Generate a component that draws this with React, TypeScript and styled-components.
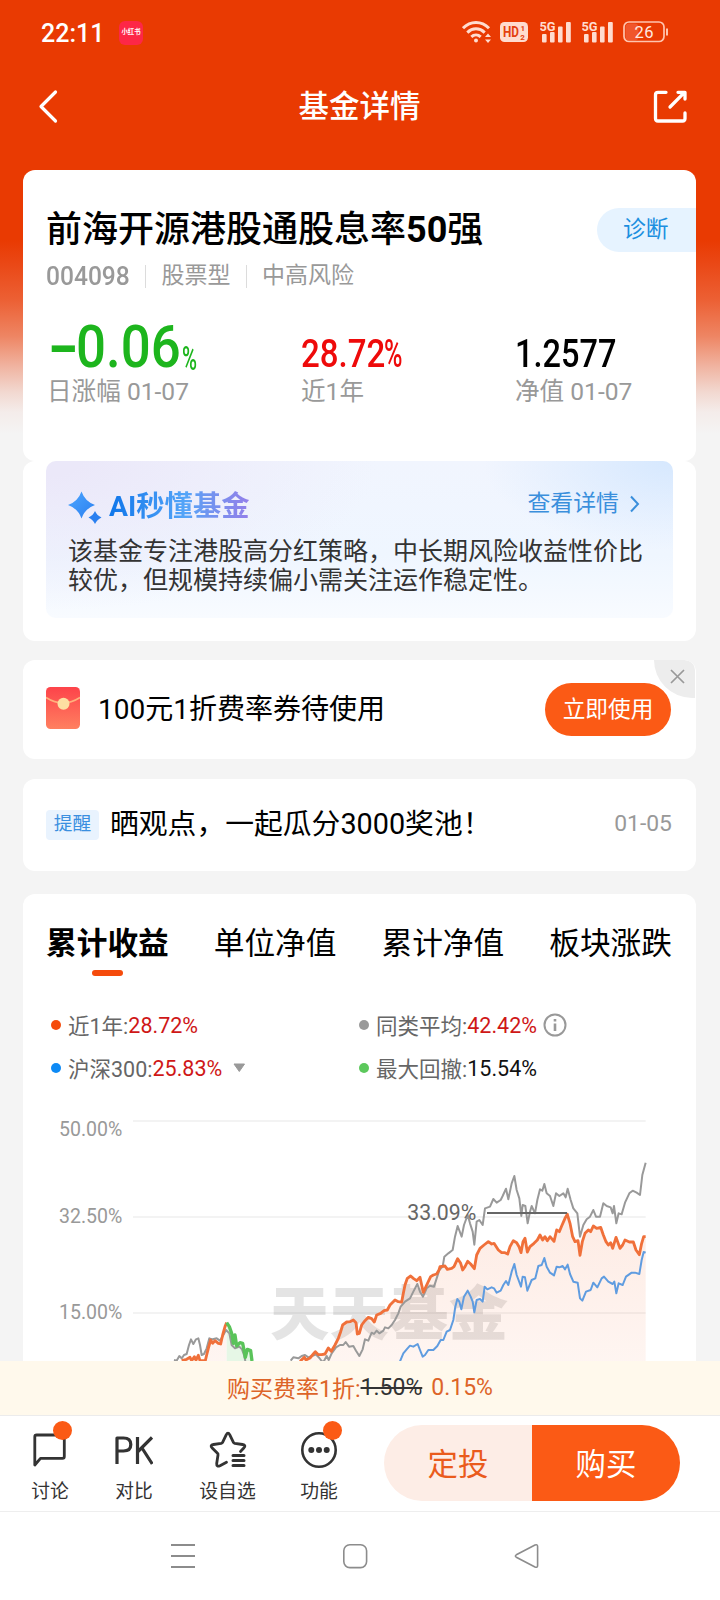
import React from "react";
import styled, { createGlobalStyle } from "styled-components";

const Global = createGlobalStyle`
  * { box-sizing: border-box; }
  body { margin: 0; background: #f4f4f4; }
  svg { display: block; flex: none; }
`;

const FONT = `Roboto, "Noto Sans CJK SC", sans-serif`;

const Page = styled.div`
  width: 720px;
  height: 1600px;
  overflow: hidden;
  display: flex;
  flex-direction: column;
  font-family: ${FONT};
  color: #000;
  white-space: nowrap;
`;

const Scroll = styled.main`
  height: 1361px;
  flex: none;
  overflow: hidden;
  padding: 0 24px 0 23px;
  background: linear-gradient(
    #e93a02 0px, #e93a02 240px, #ea4816 264px, #ec6034 300px, #ee8563 336px,
    #f0b3a0 366px, #f2d8d0 392px, #f4ecea 412px, #f4f4f4 434px
  );
`;

const StatusBar = styled.header`
  height: 65px;
  margin: 0 5px 0 18px;
  display: flex;
  align-items: center;
  color: #fff;
`;

const Clock = styled.span`
  width: 61px;
  padding-top: 2px;
  font-size: 25px;
  font-weight: 500;
  line-height: 30px;
`;

const AppBadge = styled.span`
  width: 24px;
  height: 24px;
  margin-left: 17px;
  border-radius: 6px;
  background: #fd2747;
  font-size: 6.4px;
  font-weight: 700;
  line-height: 23px;
  display: flex;
  justify-content: center;
`;

const StatusIcons = styled.div`
  margin: -1px 22px 0 auto;
  display: flex;
  align-items: center;
`;

const NavBar = styled.div`
  height: 105px;
  padding-bottom: 22px;
  margin: 0 -14px 0 -13px;
  display: grid;
  grid-template-columns: 80px 1fr 80px;
  align-items: center;
  color: #fff;
`;

const NavTitle = styled.h1`
  margin: 1px 0 0 -1px;
  text-align: center;
  font-size: 30.5px;
  font-weight: 500;
  line-height: 40px;
`;

const Card = styled.section<{ $h?: number; $gap?: number; $row?: boolean }>`
  height: ${(p) => (p.$h ? `${p.$h}px` : "auto")};
  margin-top: ${(p) => p.$gap ?? 0}px;
  border-radius: 12px;
  background: #fff;
  overflow: hidden;
  position: relative;
  ${(p) => p.$row && "display: flex; align-items: center; padding: 0 25px 0 23px;"}
`;

const TitleRow = styled.div`
  margin-top: 38px;
  padding-left: 23px;
  height: 44px;
  display: flex;
  align-items: center;
  justify-content: space-between;
`;

const FundName = styled.h2`
  margin: 0;
  font-size: 36px;
  font-weight: 500;
  line-height: 44px;
  b { font-weight: 700; }
`;

const Diagnose = styled.span`
  width: 99px;
  height: 44px;
  padding-left: 26px;
  border-radius: 22px 0 0 22px;
  background: #e6f3ff;
  color: #1c8fe0;
  font-size: 22.8px;
  line-height: 44px;
`;

const MetaRow = styled.div`
  height: 30px;
  margin-top: 9px;
  padding-left: 23px;
  display: flex;
  align-items: center;
  color: #999;
  font-size: 23px;
  line-height: 30px;
`;

const Divider = styled.i`
  width: 1px;
  height: 23px;
  margin: 0 15.5px 0 15px;
  background: #dcdcdc;
`;

const Squeeze = styled.span<{ $w: number; $scale: number; $size: number; $weight?: number }>`
  width: ${(p) => p.$w}px;
  display: inline-block;
  font-size: ${(p) => p.$size}px;
  font-weight: ${(p) => p.$weight ?? 500};
  transform: scaleX(${(p) => p.$scale});
  transform-origin: left center;
`;

const Metrics = styled.div`
  margin-top: 20px;
  padding-left: 24px;
  display: grid;
  grid-template-columns: 254px 214px 1fr;
`;

const Value = styled.div<{ $color: string }>`
  height: 66px;
  color: ${(p) => p.$color};
  display: flex;
  align-items: baseline;
  line-height: 60px;
  &::before { content: ""; height: 56px; }
`;

const Unit = styled.span`
  padding-top: 17px;
  margin-left: 2px;
  align-self: flex-start;
  height: 60px;
`;

const MetricLabel = styled.div`
  height: 30px;
  color: #999;
  font-size: 24.6px;
  line-height: 30px;
`;

const AiPanel = styled.div`
  height: 157px;
  margin: 0 23px 0 23px;
  padding: 28px 24px 0 22px;
  border-radius: 10px;
  background:
    radial-gradient(ellipse 190px 90px at 100% 0%, #d6e8fe 0%, rgba(214, 232, 254, 0) 100%),
    radial-gradient(ellipse 330px 150px at 0% 0%, #ebe8f9 10%, rgba(235, 232, 249, 0) 100%),
    linear-gradient(#f1f5fe, #eff6ff 60%, #f8fbff);
`;

const AiHead = styled.div`
  height: 34px;
  display: flex;
  align-items: center;
`;

const AiTitle = styled.b`
  margin-left: 7px;
  padding-top: 2px;
  font-size: 28.3px;
  line-height: 34px;
  font-weight: 700;
  color: transparent;
  background: linear-gradient(90deg, #0f76ea, #55a5f8 55%, #6f95f0 70%, #9380ea);
  background-clip: text;
  -webkit-background-clip: text;
`;

const AiMore = styled.span`
  margin-left: auto;
  display: flex;
  align-items: center;
  gap: 11px;
  padding-right: 9px;
  color: #3a8fdc;
  font-size: 22.9px;
  line-height: 30px;
  margin-top: -5px;
`;

const AiText = styled.p`
  margin: 14px 0 0;
  color: #333;
  font-size: 25px;
  line-height: 29.4px;
`;

const CouponText = styled.span`
  margin: -5px 0 0 18px;
  font-size: 28px;
`;

const UseButton = styled.button`
  width: 126px;
  height: 53px;
  margin-left: auto;
  padding: 0 0 4px;
  border: 0;
  border-radius: 27px;
  background: #fb5a15;
  color: #fff;
  font: 22.7px ${FONT};
`;

const CloseCorner = styled.span`
  position: absolute;
  right: 1px;
  top: 0;
  width: 41px;
  height: 38px;
  border-radius: 0 10px 0 38px;
  background: #ededed;
  display: flex;
  padding: 9px 0 0 16px;
`;

const NoticeTag = styled.span`
  width: 53px;
  height: 30px;
  border-radius: 4px;
  background: #e9f3fe;
  color: #3a8fe0;
  font-size: 18.7px;
  line-height: 29px;
  text-align: center;
`;

const NoticeText = styled.span`
  margin: -7px 0 0 11px;
  font-size: 28.8px;
`;

const NoticeDate = styled.span`
  margin: -3px -1px 0 auto;
  color: #999;
  font-size: 22.9px;
`;

const Tabs = styled.div`
  padding: 30px 24px 0 23px;
  display: flex;
  justify-content: space-between;
`;

const Tab = styled.div<{ $on?: boolean }>`
  height: 53px;
  font-size: 30.7px;
  line-height: 40px;
  font-weight: ${(p) => (p.$on ? 700 : 400)};
  display: flex;
  flex-direction: column;
  align-items: center;
  &::after {
    content: "";
    width: 31px;
    height: 6px;
    margin-top: 6px;
    border-radius: 3px;
    background: ${(p) => (p.$on ? "#f54b0c" : "transparent")};
  }
`;

const Legend = styled.div`
  height: 123px;
  padding: 26px 0 0 28px;
  display: grid;
  grid-template-columns: 308px 1fr;
  grid-auto-rows: 43px;
  align-items: center;
  align-content: start;
`;

const LegendItem = styled.div<{ $dot: string }>`
  display: flex;
  align-items: center;
  color: #666;
  font-size: 21.5px;
  &::before {
    content: "";
    width: 10px;
    height: 10px;
    margin-right: 7px;
    border-radius: 50%;
    background: ${(p) => p.$dot};
  }
  svg { margin-left: 6px; }
`;

const Num = styled.span<{ $up?: boolean }>`
  padding-top: 1px;
  color: ${(p) => (p.$up ? "#cf1717" : "#111")};
`;

const FeeBar = styled.div`
  height: 55px;
  padding-bottom: 2px;
  flex: none;
  background: #fff9ec;
  border-bottom: 1px solid #ececec;
  color: #dd6428;
  font-size: 23px;
  display: flex;
  justify-content: center;
  align-items: center;
  s { color: #333; margin-right: 9px; text-decoration-thickness: 1.5px; }
`;

const ActionBar = styled.div`
  height: 96px;
  flex: none;
  background: #fff;
  border-bottom: 1px solid #eee;
  display: flex;
`;

const Tool = styled.div<{ $w: number }>`
  width: ${(p) => p.$w}px;
  height: 95px;
  padding-top: 14px;
  color: #333;
  font-size: 18.8px;
  line-height: 26px;
  display: flex;
  flex-direction: column;
  align-items: center;
  gap: 9px;
`;

const ToolIcon = styled.span<{ $badge?: boolean }>`
  height: 40px;
  position: relative;
  display: flex;
  align-items: center;
  &::after {
    content: "";
    display: ${(p) => (p.$badge ? "block" : "none")};
    position: absolute;
    right: -5px;
    top: -9px;
    width: 19px;
    height: 19px;
    border-radius: 50%;
    background: #fb5a15;
  }
`;

const OrderButtons = styled.div`
  width: 296px;
  height: 76px;
  margin: 9px 40px 0 auto;
  border-radius: 38px;
  overflow: hidden;
  display: flex;
`;

const OrderButton = styled.button<{ $primary?: boolean }>`
  flex: 1;
  padding: 0 0 3px;
  border: 0;
  background: ${(p) => (p.$primary ? "#fb5a15" : "#fdede6")};
  color: ${(p) => (p.$primary ? "#fff" : "#ea5b1c")};
  font: 30.4px ${FONT};
`;

const SystemNav = styled.nav`
  height: 88px;
  flex: none;
  padding: 31px 180px 0 170px;
  background: #fff;
  display: flex;
  justify-content: space-between;
`;

const LIGHT = "#ffdccf";

const Signal = () => (
  <svg width="32" height="24" viewBox="0 0 32 24" fill={LIGHT}>
    <text x="-0.5" y="11" fontFamily="Roboto" fontWeight="700" fontSize="12.8" textLength="16">5G</text>
    <rect x="2" y="14" width="4.6" height="8.5" rx="1" />
    <rect x="10" y="12" width="4.6" height="10.5" rx="1" />
    <rect x="18" y="6.5" width="4.6" height="16" rx="1" />
    <rect x="26" y="2" width="4.8" height="20.5" rx="1" />
  </svg>
);

type Segment = { x: number; y: number; p: string };

/* Turns segments, each relative to its own origin, into one path. */
const trace = (segs: Segment[]) =>
  "M" +
  segs
    .flatMap((s) =>
      s.p.split(" ").map((c) => {
        const [x, y] = c.split(",").map(Number);
        return `${x + s.x},${y + s.y}`;
      })
    )
    .join("L");

const fundEarly = trace([{ x: 0, y: 0, p: "425,782 440,778 450,772 455,782 463,770 468,780 475,766 480,782 496,782 500,765 505,745 512,720 518,730 525,722 535,730 542,732 548,705 555,680 560,668" }]);
const drawdown = trace([{ x: 0, y: 0, p: "560,668 568,680 575,700 580,730 585,705 590,738 600,728 608,730 612,750 616,772 622,748 632,752 636,783" }]);
const fundMain = trace([
  { x: 630, y: 510, p: "150,274 163,262 168,270 180,264 190,252 196,245 205,254 215,254 225,252 235,234 244,244 255,225 265,205 272,185 278,165 290,156 300,155 310,150 318,158 322,192 328,190 335,165 345,152 355,142 365,146 373,156 380,135 392,130 402,122 412,120 420,105 435,90 445,95 455,96 460,70 465,45 472,25 482,18 490,25 500,32 510,22 515,45 520,67 530,45 542,20 550,15 560,12 567,0" },
  { x: 930, y: 60, p: "270,440 285,438 292,448 305,445 312,440 323,416 332,430 338,450 345,440 353,424 362,432 373,446 380,405 390,385 402,375 415,365 425,372 432,370 445,390 455,398 465,398 473,402 480,380 490,362 500,368 507,380 513,398 519,365 525,355 532,396 540,380 552,370 562,360 570,345 578,360 585,350 592,362 600,350 612,364 620,330 628,335 635,318 645,295 652,283 660,310 668,350 675,365 684,362 690,406 697,365 705,340 715,330 722,335 730,318 740,325 752,322 760,345 768,365 775,375 782,368 788,385 798,352 810,385 818,375 825,360 838,366 850,366 858,390 868,404 875,370 881,350 887,350" },
]);
const peersEarly = trace([{ x: 0, y: 0, p: "402,780 410,782 418,768 425,775 432,765 440,762 447,735 453,718 460,732 468,718 475,715 480,735 485,765 492,762 500,745 508,715 518,718 530,715 540,722 550,705 558,690 568,700 575,735 585,745 598,740 606,748 612,765 616,783" }]);
const peersMid = trace([{ x: 0, y: 0, p: "752,782 760,772 775,775 785,768 795,765 805,772 815,768 828,764 838,774 845,783" }]);
const peersMain = trace([
  { x: 630, y: 510, p: "215,275 222,273 230,258 236,270 245,250 258,232 270,225 280,225 287,216 297,230" },
  { x: 930, y: 60, p: "10,678 18,692 28,708 38,688 45,658 55,662 65,638 72,642 80,632 88,640 100,632 105,622 115,625 125,615 135,600 145,580 152,560 165,545 180,535 190,515 202,492 210,515 219,530 230,505 240,497 252,500 260,475 268,450 278,440 283,410 295,400 308,390 315,350 323,318 335,350 342,315 353,285 360,310 368,335 373,374 380,305 388,300 398,315 405,265 420,260 430,237 440,248 452,240 458,228 468,206 475,238 485,190 493,168 500,210 508,235 514,288 518,255 526,258 533,310 540,275 545,258 555,280 562,240 570,208 577,212 583,192 590,220 600,228 610,258 618,220 628,228 640,220 647,232 653,206 662,240 670,265 682,280 690,350 700,315 710,298 720,290 730,270 738,290 750,290 760,250 770,258 782,262 788,280 792,258 799,310 806,280 815,283 825,248 838,220 848,212 860,218 870,225 877,165 887,128" },
]);
const csi300 = trace([{ x: 930, y: 60, p: "150,724 160,700 170,688 180,677 190,680 203,672 210,690 218,710 225,705 235,690 250,690 262,678 272,660 280,660 290,635 300,630 310,600 316,560 322,537 328,545 334,568 342,530 353,512 362,530 368,545 373,577 380,540 390,537 398,545 404,500 412,508 425,502 432,505 440,518 452,512 460,495 468,483 475,495 485,455 493,432 500,465 513,500 518,470 525,472 532,512 545,480 556,475 565,438 575,435 583,414 590,440 600,458 612,466 620,440 628,442 638,438 645,448 653,434 660,462 670,485 683,488 690,535 697,542 708,515 722,510 730,488 742,502 755,475 762,470 775,485 788,492 793,485 799,520 806,490 818,495 828,470 845,458 855,458 868,462 875,420 881,396 887,398" }]);

const Chart = () => (
  <svg width="673" height="261" viewBox="-51 0 2019 783" fontFamily="Roboto" fill="none" strokeLinejoin="round">
    <defs>
      <linearGradient id="area" x1="0" y1="340" x2="0" y2="783" gradientUnits="userSpaceOnUse">
        <stop offset="0" stopColor="#f4713c" stopOpacity="0.14" />
        <stop offset="1" stopColor="#f4713c" stopOpacity="0.07" />
      </linearGradient>
    </defs>
    <g stroke="#f3f3f3" strokeWidth="6">
      <path d="M279 63H1817M279 351H1817M279 639H1817" />
    </g>
    <g fill="#999" fontSize="60">
      <text x="57" y="108" textLength="190" lengthAdjust="spacingAndGlyphs">50.00%</text>
      <text x="57" y="369" textLength="190" lengthAdjust="spacingAndGlyphs">32.50%</text>
      <text x="57" y="657" textLength="190" lengthAdjust="spacingAndGlyphs">15.00%</text>
    </g>
    <text x="690" y="705" fill="#000" fillOpacity="0.105" fontFamily="Noto Sans CJK SC" fontWeight="900" fontSize="178" textLength="714">天天基金</text>
    <path d={`${fundEarly}V783H425Z`} fill="url(#area)" />
    <path d={`${fundMain}V783H780Z`} fill="url(#area)" />
    <path d={`${drawdown}H560Z`} fill="#e6f7e6" />
    <g stroke="#999" strokeWidth="6">
      <path d={peersEarly} />
      <path d={peersMid} />
      <path d={peersMain} />
    </g>
    <path d={csi300} stroke="#5f9ce0" strokeWidth="6" />
    <g stroke="#f0703a" strokeWidth="8.5">
      <path d={fundEarly} />
      <path d={fundMain} />
    </g>
    <path d={drawdown} stroke="#5ac35a" strokeWidth="10" />
    <path d="M1341 339H1581" stroke="#666" strokeWidth="6" />
    <text x="1102" y="359" fill="#666" fontSize="66" textLength="207" lengthAdjust="spacingAndGlyphs">33.09%</text>
  </svg>
);

export default function App() {
  return (
    <Page>
      <Global />
      <Scroll>
        <StatusBar>
          <Clock>22:11</Clock>
          <AppBadge>小红书</AppBadge>
          <StatusIcons>
            <svg width="30" height="24" viewBox="0 0 30 24" fill="none" stroke={LIGHT} strokeWidth="3">
              <path d="M1 8.2C8.5 0.6 19.5 0.6 27 8.2M5.3 12.6C10.5 7.6 17.5 7.6 22.7 12.6M9.3 16.8C12 14.3 16 14.3 18.7 16.8" />
              <circle cx="14" cy="20.5" r="2" fill={LIGHT} stroke="none" />
              <path d="M23 17L26 13.5L29 17ZM23 19.5L26 23L29 19.5Z" fill={LIGHT} stroke="none" />
            </svg>
            <svg width="28" height="20" viewBox="0 0 28 20" style={{ marginLeft: 8 }}>
              <rect width="28" height="20" rx="4.5" fill={LIGHT} />
              <g fill="#e4410e" fontFamily="Roboto" fontWeight="700">
                <text x="3" y="15.3" fontSize="15" textLength="16" lengthAdjust="spacingAndGlyphs">HD</text>
                <text x="20.5" y="9" fontSize="8">1</text>
                <text x="20.2" y="17.8" fontSize="8">2</text>
              </g>
            </svg>
            <span style={{ marginLeft: 12 }}><Signal /></span>
            <span style={{ marginLeft: 10 }}><Signal /></span>
            <svg width="46" height="22" viewBox="0 0 46 22" style={{ marginLeft: 9 }}>
              <rect x="2.5" y="2.5" width="13" height="17" rx="4" fill="#f0562c" />
              <rect x="1" y="1" width="40" height="19.5" rx="5" fill="none" stroke="#ffc4ae" strokeWidth="1.7" />
              <path d="M44 7.5V14.5" stroke="#ffc4ae" strokeWidth="2" />
              <text x="11.5" y="16.7" fill="#ffe9e0" fontFamily="Roboto" fontSize="16.5" textLength="19">26</text>
            </svg>
          </StatusIcons>
        </StatusBar>

        <NavBar>
          <svg width="80" height="44" viewBox="0 0 80 44" fill="none" stroke="#fff" strokeWidth="3.2" strokeLinecap="round" strokeLinejoin="round">
            <path d="M45.5 7L31 21.5L45.5 36" />
          </svg>
          <NavTitle>基金详情</NavTitle>
          <svg width="80" height="44" viewBox="0 0 80 44" fill="none" stroke="#fff" strokeWidth="3.3" strokeLinecap="round" strokeLinejoin="round">
            <path d="M36 7.3H28Q25.5 7.3 25.5 9.8V33.5Q25.5 36 28 36H52.5Q55 36 55 33.5V28M40 22L54 7.8M48 7.3H55V14" />
          </svg>
        </NavBar>

        <Card $h={291}>
          <TitleRow>
            <FundName>前海开源港股通股息率<b>50</b>强</FundName>
            <Diagnose>诊断</Diagnose>
          </TitleRow>
          <MetaRow>
            <Squeeze $w={84} $scale={0.945} $size={26}>004098</Squeeze>
            <Divider />
            股票型
            <Divider />
            中高风险
          </MetaRow>
          <Metrics>
            <div>
              <Value $color="#1db51d">
                <Squeeze $w={29} $scale={1.4} $size={60} $weight={700}>-</Squeeze>
                <Squeeze $w={104} $scale={0.88} $size={60}>0.06</Squeeze>
                <Unit><Squeeze $w={15} $scale={0.6} $size={34}>%</Squeeze></Unit>
              </Value>
              <MetricLabel>日涨幅 01-07</MetricLabel>
            </div>
            <div>
              <Value $color="#ee0a0a">
                <Squeeze $w={83} $scale={0.87} $size={38}>28.72</Squeeze>
                <Squeeze $w={20} $scale={0.66} $size={38}>%</Squeeze>
              </Value>
              <MetricLabel>近1年</MetricLabel>
            </div>
            <div>
              <Value $color="#000">
                <Squeeze $w={100} $scale={0.855} $size={38}>1.2577</Squeeze>
              </Value>
              <MetricLabel>净值 01-07</MetricLabel>
            </div>
          </Metrics>
        </Card>

        <Card $h={180}>
          <AiPanel>
            <AiHead>
              <svg width="34" height="34" viewBox="0 0 34 34" style={{ marginTop: 4 }}>
                <defs>
                  <linearGradient id="star" x1="0" y1="0" x2="1" y2="1">
                    <stop offset="0" stopColor="#4da6ff" />
                    <stop offset="1" stopColor="#2a7ff0" />
                  </linearGradient>
                </defs>
                <path d="M13.5 0.5Q17 10.5 27 14Q17 17.5 13.5 27.5Q10 17.5 0 14Q10 10.5 13.5 0.5Z" fill="url(#star)" />
                <path d="M27 20Q29 24.5 33.5 26.5Q29 28.5 27 33Q25 28.5 20.5 26.5Q25 24.5 27 20Z" fill="#2a80f0" />
              </svg>
              <AiTitle>AI秒懂基金</AiTitle>
              <AiMore>
                查看详情
                <svg width="10" height="18" viewBox="0 0 10 18" fill="none" stroke="#3a8fdc" strokeWidth="2">
                  <path d="M1 1.5L8 9L1 16.5" />
                </svg>
              </AiMore>
            </AiHead>
            <AiText>
              该基金专注港股高分红策略，中长期风险收益性价比
              <br />
              较优，但规模持续偏小需关注运作稳定性。
            </AiText>
          </AiPanel>
        </Card>

        <Card $h={99} $gap={19} $row>
          <svg width="34" height="42" viewBox="0 0 34 42" style={{ marginTop: -3 }}>
            <defs>
              <linearGradient id="packet" x1="0" y1="0" x2="0" y2="1">
                <stop offset="0" stopColor="#fd434a" />
                <stop offset="1" stopColor="#ff8060" />
              </linearGradient>
            </defs>
            <rect width="34" height="42" rx="4.5" fill="url(#packet)" />
            <path d="M0 10.5Q17 21.5 34 10.5" fill="none" stroke="#ffb07c" strokeWidth="1.5" />
            <circle cx="17.5" cy="16.8" r="6" fill="#fddfa2" />
          </svg>
          <CouponText>100元1折费率券待使用</CouponText>
          <UseButton>立即使用</UseButton>
          <CloseCorner>
            <svg width="15" height="15" viewBox="0 0 15 15" stroke="#999" strokeWidth="1.7">
              <path d="M1 1L14 14M14 1L1 14" />
            </svg>
          </CloseCorner>
        </Card>

        <Card $h={92} $gap={20} $row>
          <NoticeTag>提醒</NoticeTag>
          <NoticeText>晒观点，一起瓜分3000奖池！</NoticeText>
          <NoticeDate>01-05</NoticeDate>
        </Card>

        <Card $h={480} $gap={23}>
          <Tabs>
            <Tab $on>累计收益</Tab>
            <Tab>单位净值</Tab>
            <Tab>累计净值</Tab>
            <Tab>板块涨跌</Tab>
          </Tabs>
          <Legend>
            <LegendItem $dot="#f54b0c">近1年:<Num $up>28.72%</Num></LegendItem>
            <LegendItem $dot="#999">
              同类平均:<Num $up>42.42%</Num>
              <svg width="24" height="24" viewBox="0 0 24 24" fill="none" stroke="#999" strokeWidth="2">
                <circle cx="12" cy="12" r="10.5" />
                <path d="M12 10.5V18M12 6V8.6" strokeWidth="2.6" />
              </svg>
            </LegendItem>
            <LegendItem $dot="#0d8af5">
              沪深300:<Num $up>25.83%</Num>
              <svg width="24" height="10" viewBox="0 0 24 10">
                <path d="M6 1H16.5L11.3 8.5Z" fill="#999" stroke="#999" strokeLinejoin="round" />
              </svg>
            </LegendItem>
            <LegendItem $dot="#5cc85c">最大回撤:<Num>15.54%</Num></LegendItem>
          </Legend>
          <Chart />
        </Card>
      </Scroll>

      <FeeBar>
        购买费率1折:<s>1.50%</s>0.15%
      </FeeBar>

      <ActionBar>
        <Tool $w={100}>
          <ToolIcon $badge>
            <svg width="34" height="34" viewBox="0 0 34 34" fill="none" stroke="#333" strokeWidth="2.8" strokeLinejoin="round">
              <path d="M1.8 32V3.8Q1.8 2 3.6 2H29.5Q31.3 2 31.3 3.8V23.5Q31.3 25.3 29.5 25.3H7.5L1.8 32Z" />
            </svg>
          </ToolIcon>
          讨论
        </Tool>
        <Tool $w={68}>
          <ToolIcon>
            <svg width="38" height="30" viewBox="0 0 38 30" fill="none" stroke="#333" strokeWidth="3.2" strokeLinejoin="round">
              <path d="M2 29V3H8.5Q15.8 3 15.8 9.5T8.5 16H2M22.5 2V29M37 2.5L23 16.5M27 13L37.3 29" />
            </svg>
          </ToolIcon>
          对比
        </Tool>
        <Tool $w={119}>
          <ToolIcon>
            <svg width="38" height="38" viewBox="0 0 38 38" fill="none" stroke="#333" strokeWidth="2.8" strokeLinecap="round" strokeLinejoin="round">
              <path d="M31.5 20.5L34.8 17Q37.5 14.2 33.5 13.5L25.8 12.3Q24.8 12 24.3 11.2L20.8 3.8Q19 0.5 17.2 3.8L13.7 11.2Q13.2 12 12.2 12.3L4.5 13.5Q0.5 14.2 3.2 17L8.5 22.3Q9.2 23 9 24L7.7 32.5Q7.5 36.3 11 34.8L17.5 31.3" />
              <path d="M24 24.5H35M24 29.5H35M24 34.5H35" strokeWidth="3" />
            </svg>
          </ToolIcon>
          设自选
        </Tool>
        <Tool $w={64}>
          <ToolIcon $badge>
            <svg width="36" height="36" viewBox="0 0 36 36">
              <circle cx="18" cy="18" r="16.7" fill="none" stroke="#333" strokeWidth="2.6" />
              <circle cx="10.3" cy="18" r="3" fill="#333" />
              <circle cx="18" cy="18" r="3" fill="#333" />
              <circle cx="25.7" cy="18" r="3" fill="#333" />
            </svg>
          </ToolIcon>
          功能
        </Tool>
        <OrderButtons>
          <OrderButton>定投</OrderButton>
          <OrderButton $primary>购买</OrderButton>
        </OrderButtons>
      </ActionBar>

      <SystemNav>
        <svg width="26" height="26" viewBox="0 0 26 26" stroke="#8c8c8c" strokeWidth="1.8">
          <path d="M1 2H25M1 13H25M1 24H25" />
        </svg>
        <svg width="26" height="26" viewBox="0 0 26 26" fill="none" stroke="#8c8c8c" strokeWidth="1.6">
          <rect x="1.8" y="1.8" width="22.8" height="22.8" rx="6" />
        </svg>
        <svg width="26" height="26" viewBox="0 0 26 26" fill="none" stroke="#8c8c8c" strokeWidth="1.6" strokeLinejoin="round">
          <path d="M2.3 11.8L21 2Q23.6 1 23.6 3.5V22.5Q23.6 25 21 24L2.3 14.2Q0.5 13 2.3 11.8Z" />
        </svg>
      </SystemNav>
    </Page>
  );
}
